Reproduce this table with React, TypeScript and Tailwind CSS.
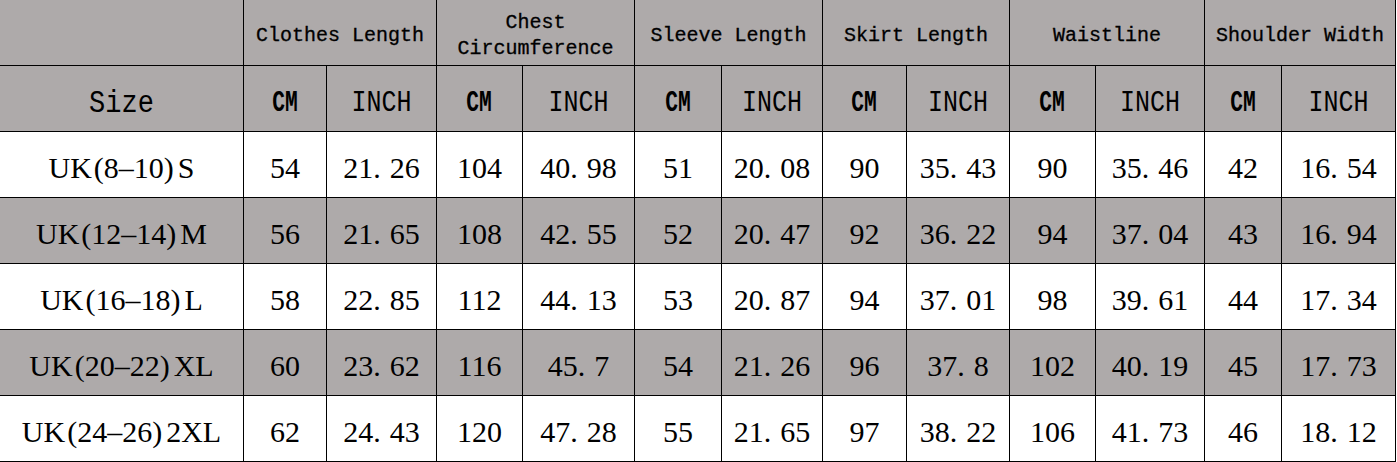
import React from 'react';

const GROUPS = [
  ['Clothes Length'],
  ['Chest', 'Circumference'],
  ['Sleeve Length'],
  ['Skirt Length'],
  ['Waistline'],
  ['Shoulder Width'],
];

const ROWS = [
  { size: ['UK', '8–10', 'S'], vals: ['54', '21.26', '104', '40.98', '51', '20.08', '90', '35.43', '90', '35.46', '42', '16.54'] },
  { size: ['UK', '12–14', 'M'], vals: ['56', '21.65', '108', '42.55', '52', '20.47', '92', '36.22', '94', '37.04', '43', '16.94'] },
  { size: ['UK', '16–18', 'L'], vals: ['58', '22.85', '112', '44.13', '53', '20.87', '94', '37.01', '98', '39.61', '44', '17.34'] },
  { size: ['UK', '20–22', 'XL'], vals: ['60', '23.62', '116', '45.7', '54', '21.26', '96', '37.8', '102', '40.19', '45', '17.73'] },
  { size: ['UK', '24–26', '2XL'], vals: ['62', '24.43', '120', '47.28', '55', '21.65', '97', '38.22', '106', '41.73', '46', '18.12'] },
];

// a decimal like "21.26" gets a wide gap after the point, as in the sheet
const Num = ({ v }: { v: string }) => {
  const [a, b] = v.split('.');
  if (b === undefined) return <>{a}</>;
  return (
    <>
      {a}
      <span className="mr-[9px]">.</span>
      {b}
    </>
  );
};

const mono = "font-['Liberation_Mono','DejaVu_Sans_Mono',monospace]";
const serif = "font-['Liberation_Serif','DejaVu_Serif',serif]";

export default function App() {
  return (
    <div className="w-[1397px] h-[462px] bg-white">
      <div className="grid grid-cols-[243px_82px_109px_85px_111px_86px_100px_83px_102px_85px_108px_76px_113px] grid-rows-[repeat(7,65px)] gap-px bg-black pr-px pb-px w-[1396px] text-black">
        {/* header row 1 */}
        <div className="bg-[#aeaaaa]" />
        {GROUPS.map((g, i) => (
          <div
            key={i}
            className={`col-span-2 bg-[#aeaaaa] flex flex-col items-center justify-center pt-[6px] text-[20px] leading-[26px] ${mono}`}
          >
            {g.map((line) => (
              <span key={line} className="whitespace-pre [-webkit-text-stroke:0.3px_black]">{line}</span>
            ))}
          </div>
        ))}

        {/* header row 2 */}
        <div className={`bg-[#aeaaaa] flex items-center justify-center pt-[11px] text-[27px] ${mono}`}>
          <span className="inline-block scale-y-[1.18]">Size</span>
        </div>
        {GROUPS.map((_, i) => (
          <React.Fragment key={i}>
            <div className={`bg-[#aeaaaa] flex items-center justify-center pt-[10px] text-[25px] ${mono}`}>
              <span className="inline-block scale-y-[1.2] font-bold scale-x-[0.85]">CM</span>
            </div>
            <div className={`bg-[#aeaaaa] flex items-center justify-center pt-[10px] text-[25px] ${mono}`}>
              <span className="inline-block scale-y-[1.2]">INCH</span>
            </div>
          </React.Fragment>
        ))}

        {/* data rows */}
        {ROWS.map((r, ri) => {
          const bg = ri % 2 === 1 ? 'bg-[#aeaaaa]' : 'bg-white';
          return (
            <React.Fragment key={ri}>
              <div className={`${bg} flex items-center justify-center pt-[6px] text-[30px] ${serif}`}>
                {r.size[0]}
                <span className="ml-[2px]">(</span>
                {r.size[1]}
                <span className="mr-[4px]">)</span>
                {r.size[2]}
              </div>
              {r.vals.map((v, vi) => (
                <div key={vi} className={`${bg} flex items-center justify-center pt-[6px] text-[30px] ${serif}`}>
                  <Num v={v} />
                </div>
              ))}
            </React.Fragment>
          );
        })}
      </div>
    </div>
  );
}
